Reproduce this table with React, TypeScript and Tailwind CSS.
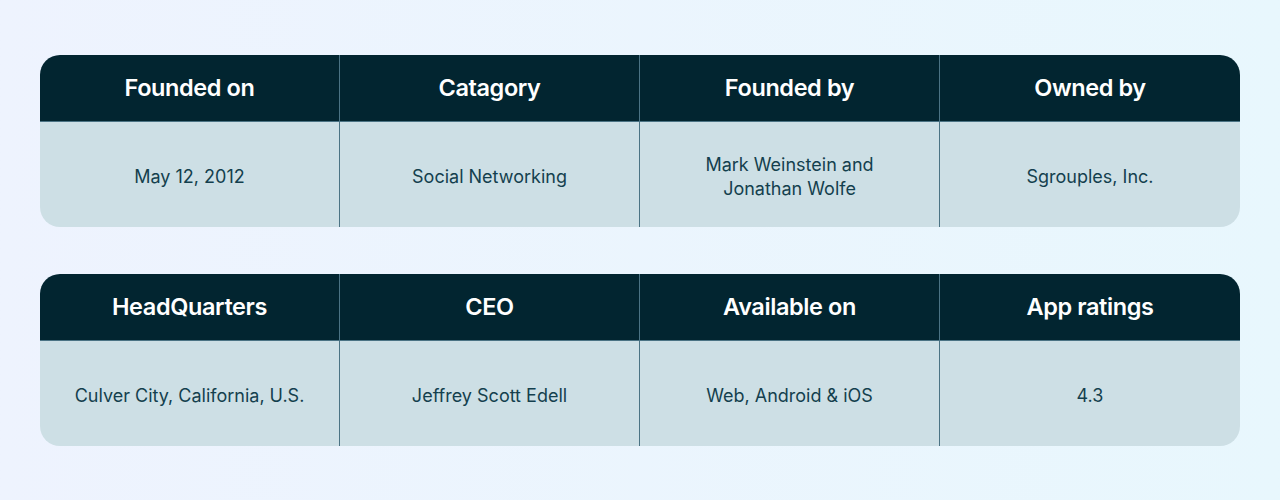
const tables = [
  [
    ["Founded on", "May 12, 2012"],
    ["Catagory", "Social Networking"],
    ["Founded by", "Mark Weinstein and\nJonathan Wolfe"],
    ["Owned by", "Sgrouples, Inc."],
  ],
  [
    ["HeadQuarters", "Culver City, California, U.S."],
    ["CEO", "Jeffrey Scott Edell"],
    ["Available on", "Web, Android & iOS"],
    ["App ratings", "4.3"],
  ],
];

function InfoTable({ cols }: { cols: string[][] }) {
  return (
    <div className="w-full rounded-[20px] overflow-hidden grid grid-cols-4">
      {cols.map(([head, value], i) => (
        <div
          key={head}
          className={`flex flex-col ${i < 3 ? "border-r border-[#4b7384]" : ""}`}
        >
          <div className="h-[67px] bg-[#022530] border-b border-[#4b7384] flex items-center justify-center text-white text-[23.5px] font-semibold tracking-[-0.4px]">
            {head}
          </div>
          <div className="h-[105px] pt-[4px] bg-[#cddfe5] flex items-center justify-center text-center px-4 whitespace-pre-line text-[18px] leading-[24px] text-[#143f4e]">
            {value}
          </div>
        </div>
      ))}
    </div>
  );
}

export default function App() {
  return (
    <div
      className="w-[1280px] h-[500px] bg-gradient-to-r from-[#eef3fe] to-[#e8f7fd] px-10 pt-[55px] flex flex-col gap-[47px]"
      style={{ fontFamily: "Inter, 'Noto Sans', sans-serif" }}
    >
      {tables.map((cols, i) => (
        <InfoTable key={i} cols={cols} />
      ))}
    </div>
  );
}
